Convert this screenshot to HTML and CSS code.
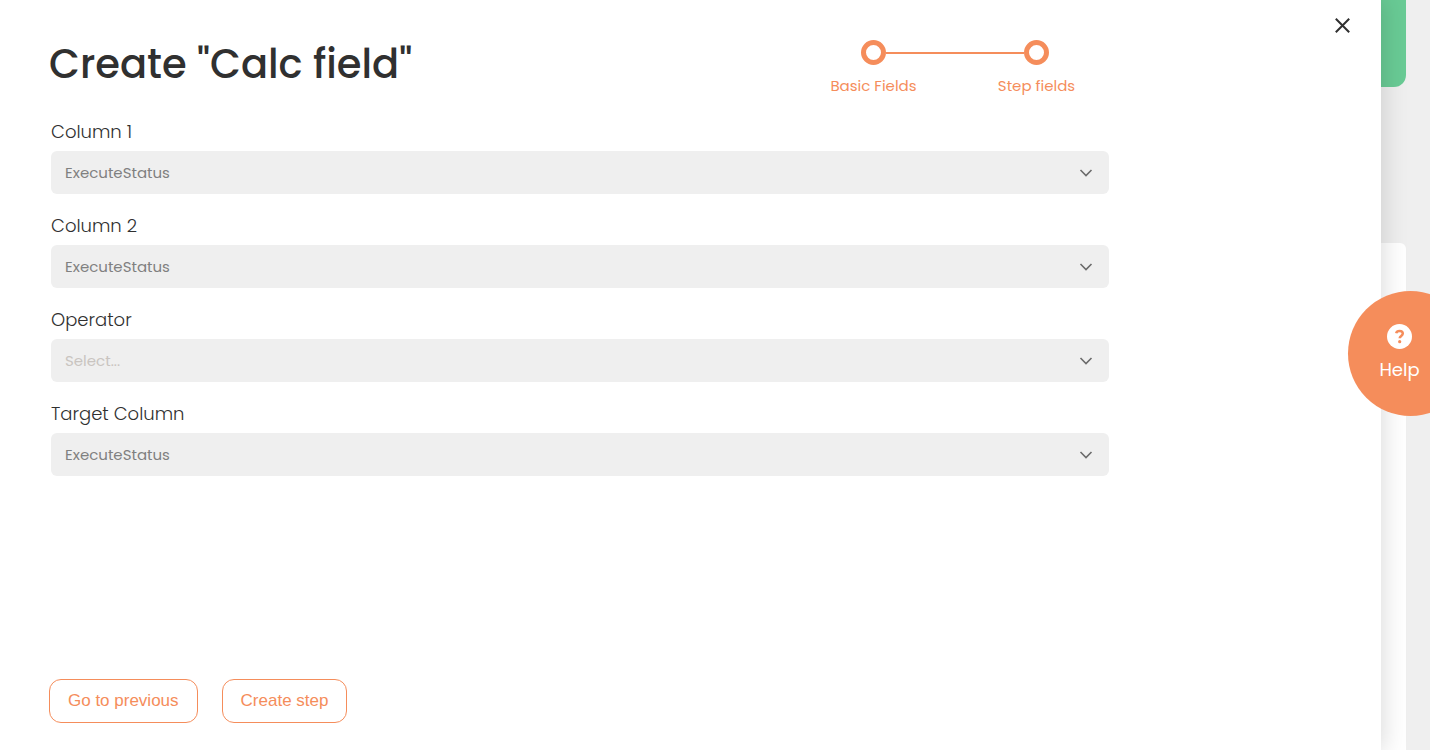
FILE: index.html
```html
<!DOCTYPE html>
<html lang="en">
<head>
<meta charset="utf-8">
<title>Create "Calc field"</title>
<link rel="stylesheet" href="styles.css">
</head>
<body>
<div class="page" aria-hidden="true">
  <div class="banner"></div>
  <div class="panel"></div>
</div>
<main class="drawer">
  <button class="close" type="button" aria-label="Close">
    <svg viewBox="0 0 16 16" width="16" height="16"><path d="M.8 .7 14.2 14.3M14.2 .7 .8 14.3"/></svg>
  </button>
  <header class="header">
    <h1 class="title">Create "Calc field"</h1>
    <ol class="steps">
      <li class="step"><span class="track"><span class="dot"></span></span>Basic Fields</li>
      <li class="step"><span class="track"><span class="dot"></span></span>Step fields</li>
    </ol>
  </header>
  <form class="form" id="calc-form">
    <div class="field">
      <label class="label" for="column1">Column 1</label>
      <select class="select" id="column1"><option>ExecuteStatus</option></select>
      <svg class="chevron" viewBox="0 0 14 8" width="14" height="8"><path d="M1.5 1 7 6.5 12.5 1"/></svg>
    </div>
    <div class="field">
      <label class="label" for="column2">Column 2</label>
      <select class="select" id="column2"><option>ExecuteStatus</option></select>
      <svg class="chevron" viewBox="0 0 14 8" width="14" height="8"><path d="M1.5 1 7 6.5 12.5 1"/></svg>
    </div>
    <div class="field">
      <label class="label" for="operator">Operator</label>
      <select class="select select-empty" id="operator"><option>Select...</option></select>
      <svg class="chevron" viewBox="0 0 14 8" width="14" height="8"><path d="M1.5 1 7 6.5 12.5 1"/></svg>
    </div>
    <div class="field">
      <label class="label" for="target">Target Column</label>
      <select class="select" id="target"><option>ExecuteStatus</option></select>
      <svg class="chevron" viewBox="0 0 14 8" width="14" height="8"><path d="M1.5 1 7 6.5 12.5 1"/></svg>
    </div>
  </form>
  <footer class="actions">
    <button class="action" type="button">Go to previous</button>
    <button class="action" type="submit" form="calc-form">Create step</button>
  </footer>
</main>
<button class="help" type="button">
  <svg viewBox="0 0 25 25" width="25" height="25">
    <circle cx="12.5" cy="12.5" r="12.5" fill="#fff"/>
    <path d="M9.2 9.2C9.6 7.6 10.8 6.9 12.5 6.9c2 0 3.3 1 3.3 2.7 0 2.3-3.1 2.3-3.1 4.6" fill="none" stroke="#f58d5b" stroke-width="2.5"/>
    <circle cx="12.7" cy="17.7" r="1.6" fill="#f58d5b"/>
  </svg>
  <span>Help</span>
</button>
</body>
</html>
```
FILE: styles.css
```css
* { box-sizing: border-box; }

body {
  margin: 0;
  height: 100vh;
  overflow: hidden;
  background: #efefef;
  color: #303030;
  font-family: Poppins, Inter, sans-serif;
}

.page {
  display: flex;
  flex-direction: column;
  gap: 156px;
  height: 100%;
  padding: 0 24px;
}
.banner {
  height: 87px;
  border-radius: 0 0 12px 12px;
  background: #69cb95;
}
.panel {
  flex: 1;
  border-radius: 6px 6px 0 0;
  background: #fff;
}

.drawer {
  position: absolute;
  inset: 0 49px 0 0;
  display: flex;
  flex-direction: column;
  padding: 40px 0 27px 49px;
  background: #fff;
  box-shadow: 0 0 24px 2px rgba(0, 0, 0, 0.15);
}
.close {
  position: absolute;
  top: 10px;
  right: 22px;
  display: grid;
  place-items: center;
  width: 32px;
  height: 32px;
  padding: 0;
  border: 0;
  background: none;
}
.close path {
  fill: none;
  stroke: #303030;
  stroke-width: 2;
}

.header {
  display: flex;
  justify-content: space-between;
  padding-right: 263px;
}
.title {
  margin: 0;
  font-size: 40px;
  line-height: 48px;
  font-weight: 500;
}
.steps {
  display: flex;
  margin: 0;
  padding: 0;
  list-style: none;
  color: #f58d5b;
}
.step {
  display: flex;
  flex-direction: column;
  gap: 10px;
  width: 163px;
  font-size: 15px;
  line-height: 22px;
  text-align: center;
}
.track {
  display: flex;
  align-items: center;
}
.track::before,
.track::after {
  content: "";
  flex: 1;
  height: 2px;
}
.step:first-child .track::after,
.step:last-child .track::before { background: #f58d5b; }
.dot {
  width: 25px;
  height: 25px;
  border: 5px solid #f58d5b;
  border-radius: 50%;
}

.form {
  display: flex;
  flex-direction: column;
  gap: 20px;
  padding: 23px 272px 0 2px;
}
.field {
  position: relative;
  display: flex;
  flex-direction: column;
  gap: 7px;
}
.label {
  font-size: 18px;
  line-height: 24px;
  font-weight: 300;
}
.select {
  appearance: none;
  width: 100%;
  height: 43px;
  padding: 0 40px 0 14px;
  border: 0;
  border-radius: 6px;
  background: #efefef;
  color: #808080;
  font-family: inherit;
  font-size: 15px;
}
.select-empty { color: #c9c4c0; }
.chevron {
  position: absolute;
  right: 16px;
  bottom: 17px;
  fill: none;
  stroke: #6b6b6b;
  stroke-width: 1.6;
  pointer-events: none;
}

.actions {
  display: flex;
  gap: 24px;
  margin-top: auto;
}
.action {
  height: 44px;
  padding: 0 18px;
  border: 1px solid #f58d5b;
  border-radius: 12px;
  background: #fff;
  color: #f58d5b;
  font-family: "Liberation Sans", Arial, sans-serif;
  font-size: 17px;
}

.help {
  position: absolute;
  top: 291px;
  right: -43px;
  display: flex;
  flex-direction: column;
  align-items: center;
  justify-content: center;
  gap: 8px;
  width: 125px;
  height: 125px;
  padding: 0 22px 0 0;
  border: 0;
  border-radius: 50%;
  background: #f58d5b;
  color: #fff;
  font-family: inherit;
  font-size: 18px;
  line-height: 26px;
}
```
